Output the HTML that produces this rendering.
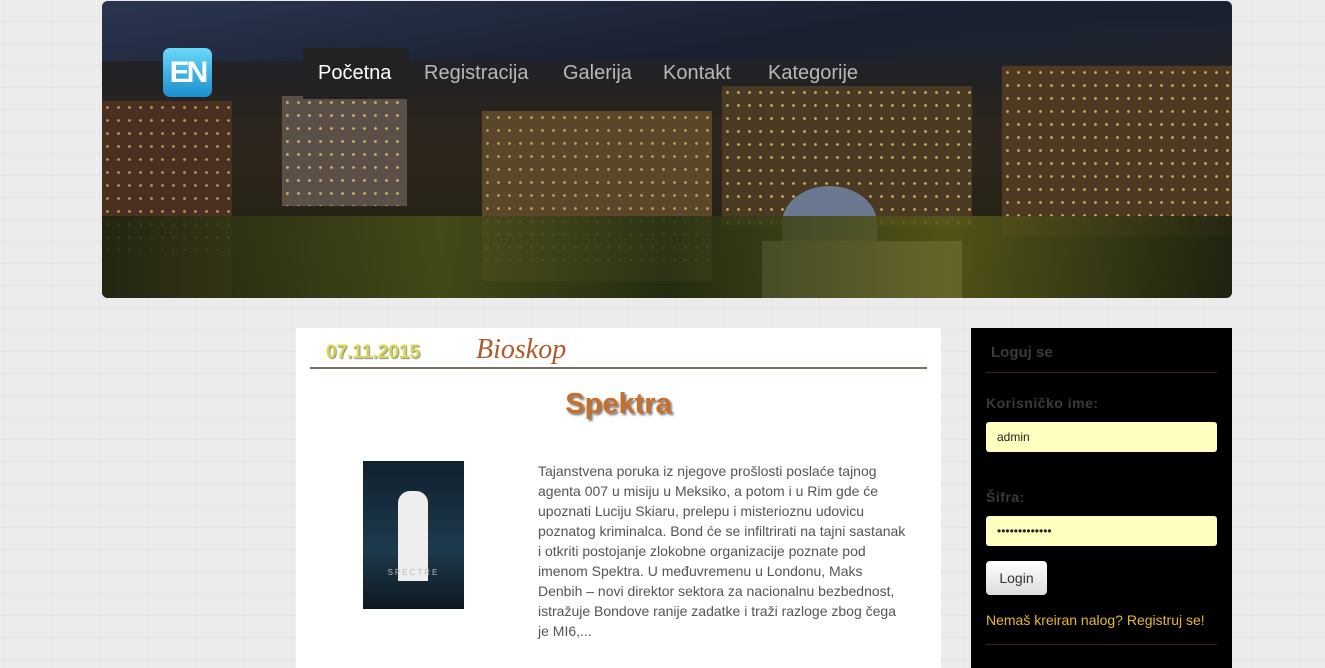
<!DOCTYPE html>
<html><head><meta charset="utf-8"><style>
*{margin:0;padding:0;box-sizing:border-box}
body{width:1325px;height:660px;overflow:hidden;background:#ebebeb;font-family:"Liberation Sans",sans-serif;position:relative;
background-image:repeating-linear-gradient(0deg,#e4e4e4 0 1px,transparent 1px 22px),repeating-linear-gradient(90deg,#f0f0f0 0 1px,transparent 1px 48px);}
#hdr{position:absolute;left:102px;top:1px;width:1130px;height:297px;border-radius:6px;overflow:hidden;
background:linear-gradient(180deg,#1a2030 0%,#20242e 15%,#232222 28%,#2e261e 45%,#2a2418 65%,#1e2212 85%,#161a0c 100%);}
.b{position:absolute}
.w{background-image:radial-gradient(circle,#ffd870 0 1.2px,transparent 1.6px);background-size:11px 13px}
#nav{position:absolute;top:48px;height:51px;left:0;width:1325px;font-size:20px;color:#b8b8b8}
#nav div{position:absolute;top:14px}
#logo{position:absolute;left:163px;top:48px;width:49px;height:49px;border-radius:7px;background:linear-gradient(#6ad8f8,#1a8fcf);color:#fff;font-weight:bold;font-size:30px;line-height:49px;text-align:center;letter-spacing:-3px}
#main{position:absolute;left:296px;top:328px;width:645px;height:340px;background:#fff}
#date{position:absolute;left:30px;top:14px;font-size:19px;font-weight:bold;color:#d8d850;text-shadow:1px 1px 1px #888}
#cat{position:absolute;left:180px;top:6px;font-family:"Liberation Serif",serif;font-style:italic;font-size:28px;color:#b05a2a}
#line{position:absolute;left:14px;top:39px;width:617px;height:2px;background:#7a6e60}
#ttl{position:absolute;left:0;width:645px;top:60px;text-align:center;font-size:29px;font-weight:bold;color:#c8702a;text-shadow:2px 2px 2px #777}
#poster{position:absolute;left:67px;top:133px;width:101px;height:148px;background:linear-gradient(#10202e,#1d3a4e 60%,#0d1820)}
#txt{position:absolute;left:242px;top:133px;width:372px;font-size:14px;line-height:20px;color:#555}
#side{position:absolute;left:971px;top:328px;width:261px;height:340px;background:#000}
#side h3{position:absolute;left:20px;top:16px;font-size:15px;color:#3a3a3a}
.hr{position:absolute;left:15px;width:231px;height:1px;background:#3a2618}
.lbl{position:absolute;left:15px;font-size:14px;color:#3a3a3a;font-weight:bold;letter-spacing:.5px}
.in{position:absolute;left:15px;width:231px;height:30px;background:#ffffc0;border-radius:3px;font-size:12px;padding:8px 11px;color:#222}
#btn{position:absolute;left:15px;top:233px;width:61px;height:34px;border-radius:4px;background:linear-gradient(#fff,#ddd);font-size:14px;color:#333;text-align:center;line-height:34px}
#reg{position:absolute;left:15px;top:284px;font-size:14px;color:#e8b830}
</style></head><body>
<div id="hdr">
<div class="b" style="left:0;top:0;width:1130px;height:60px;background:linear-gradient(170deg,#2a3550,#1a2030 60%,transparent)"></div>
<div class="b" style="left:0;top:100px;width:130px;height:200px;background:#4a3020"></div>
<div class="b w" style="left:0;top:100px;width:130px;height:150px;opacity:.6"></div>
<div class="b" style="left:180px;top:95px;width:125px;height:110px;background:#5a5048"></div>
<div class="b w" style="left:180px;top:95px;width:125px;height:110px;opacity:.7"></div>
<div class="b" style="left:380px;top:110px;width:230px;height:170px;background:#5a4628"></div>
<div class="b w" style="left:380px;top:110px;width:230px;height:150px;opacity:.6"></div>
<div class="b" style="left:620px;top:85px;width:250px;height:140px;background:#4a3a24"></div>
<div class="b w" style="left:620px;top:85px;width:250px;height:140px;opacity:.7"></div>
<div class="b" style="left:900px;top:65px;width:230px;height:170px;background:#4e3a22"></div>
<div class="b w" style="left:900px;top:65px;width:230px;height:160px;opacity:.7"></div>
<div class="b" style="left:680px;top:185px;width:95px;height:75px;border-radius:50% 50% 0 0;background:#6a7890"></div>
<div class="b" style="left:660px;top:240px;width:200px;height:60px;background:#a8a090"></div>
<div class="b" style="left:0;top:215px;width:1130px;height:85px;background:linear-gradient(90deg,#1e2410,#4a5018 30%,#263012 50%,#5a5a18 75%,#1e2410);opacity:.85"></div>
</div>
<div id="logo">EN</div>
<div id="nav">
<div style="left:303px;top:0;width:106px;height:51px;background:#222"></div>
<div style="left:318px;color:#fff">Početna</div>
<div style="left:424px">Registracija</div>
<div style="left:563px">Galerija</div>
<div style="left:663px">Kontakt</div>
<div style="left:768px">Kategorije</div>
</div>
<div id="main">
<div id="date">07.11.2015</div><div id="cat">Bioskop</div><div id="line"></div>
<div id="ttl">Spektra</div>
<div id="poster"><div style="position:absolute;left:35px;top:30px;width:30px;height:90px;background:#eee;border-radius:12px 12px 0 0"></div><div style="position:absolute;left:0;width:101px;top:107px;text-align:center;color:#bbb;font-size:8px;letter-spacing:2px">SPECTRE</div></div>
<div id="txt">Tajanstvena poruka iz njegove prošlosti poslaće tajnog agenta 007 u misiju u Meksiko, a potom i u Rim gde će upoznati Luciju Skiaru, prelepu i misterioznu udovicu poznatog kriminalca. Bond će se infiltrirati na tajni sastanak i otkriti postojanje zlokobne organizacije poznate pod imenom Spektra. U međuvremenu u Londonu, Maks Denbih – novi direktor sektora za nacionalnu bezbednost, istražuje Bondove ranije zadatke i traži razloge zbog čega je MI6,...</div>
</div>
<div id="side">
<h3>Loguj se</h3><div class="hr" style="top:44px"></div>
<div class="lbl" style="top:67px">Korisničko ime:</div>
<div class="in" style="top:94px">admin</div>
<div class="lbl" style="top:161px">Šifra:</div>
<div class="in" style="top:188px">•••••••••••••</div>
<div id="btn">Login</div>
<div id="reg">Nemaš kreiran nalog? Registruj se!</div>
<div class="hr" style="top:316px"></div>
</div>
</body></html>
